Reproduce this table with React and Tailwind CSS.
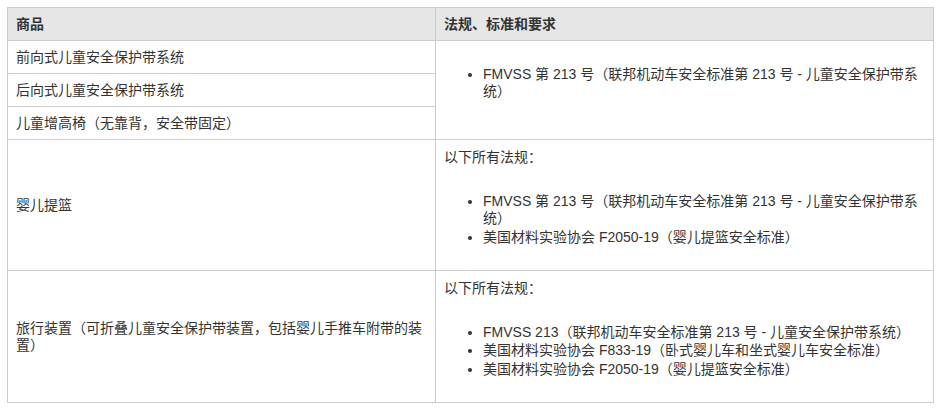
import React from "react";

const font = { fontFamily: '"Liberation Sans", Arial, "Noto Sans CJK SC", sans-serif' };

const Bullets = ({ items }) => (
  <ul className="list-disc pl-[39px] mb-[16px] flex flex-col gap-[1.5px]">
    {items.map((t) => (
      <li key={t}>{t}</li>
    ))}
  </ul>
);

const App = () => {
  const cell = "border border-[#cccccc] px-[8px] pt-[8px] pb-[7px] align-middle";
  const fmvss = "FMVSS 第 213 号（联邦机动车安全标准第 213 号 - 儿童安全保护带系统）";
  const carrier = "美国材料实验协会 F2050-19（婴儿提篮安全标准）";

  return (
    <div className="min-h-screen bg-white p-[7px] text-[14px] leading-[17px] text-[#333333]" style={font}>
      <table className="table-fixed border-collapse w-[926px]">
        <colgroup>
          <col className="w-[428px]" />
          <col className="w-[498px]" />
        </colgroup>
        <thead>
          <tr className="bg-[#e6e6e6]">
            <th className={`${cell} text-left font-bold`}>商品</th>
            <th className={`${cell} text-left font-bold`}>法规、标准和要求</th>
          </tr>
        </thead>
        <tbody>
          <tr>
            <td className={cell}>前向式儿童安全保护带系统</td>
            <td rowSpan={3} className={`${cell} pt-[8px]`}>
              <Bullets items={[fmvss]} />
            </td>
          </tr>
          <tr>
            <td className={cell}>后向式儿童安全保护带系统</td>
          </tr>
          <tr>
            <td className={cell}>儿童增高椅（无靠背，安全带固定）</td>
          </tr>
          <tr>
            <td className={cell}>婴儿提篮</td>
            <td className="border border-[#cccccc] px-[8px] pt-[9px] pb-[8px] align-top">
              <p className="mb-[27px]">以下所有法规：</p>
              <Bullets items={[fmvss, carrier]} />
            </td>
          </tr>
          <tr>
            <td className={cell}>旅行装置（可折叠儿童安全保护带装置，包括婴儿手推车附带的装置）</td>
            <td className="border border-[#cccccc] px-[8px] pt-[9px] pb-[8px] align-top">
              <p className="mb-[27px]">以下所有法规：</p>
              <Bullets
                items={[
                  "FMVSS 213（联邦机动车安全标准第 213 号 - 儿童安全保护带系统）",
                  "美国材料实验协会 F833-19（卧式婴儿车和坐式婴儿车安全标准）",
                  carrier,
                ]}
              />
            </td>
          </tr>
        </tbody>
      </table>
    </div>
  );
};

export default App;
